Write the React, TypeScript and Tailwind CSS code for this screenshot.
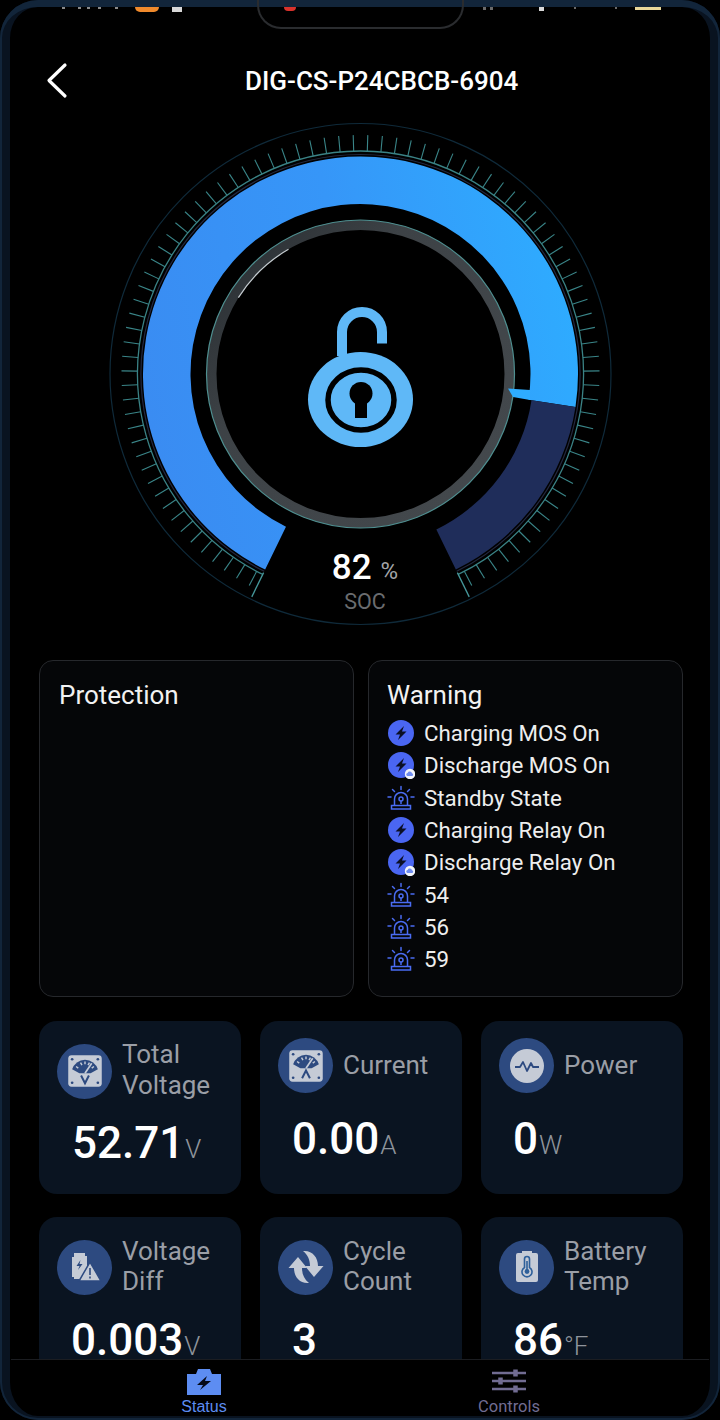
import type { ReactNode } from "react"

const CX = 360.5
const CY = 374

// angle in degrees, 0 = straight down, growing clockwise through the left side
const polar = (r: number, deg: number) => {
  const a = (deg * Math.PI) / 180
  return { x: CX - r * Math.sin(a), y: CY + r * Math.cos(a) }
}

const arcBand = (r1: number, r2: number, from: number, to: number) => {
  const a = polar(r2, from)
  const b = polar(r2, to)
  const c = polar(r1, to)
  const d = polar(r1, from)
  const large = to - from > 180 ? 1 : 0
  return `M${a.x} ${a.y}A${r2} ${r2} 0 ${large} 1 ${b.x} ${b.y}L${c.x} ${c.y}A${r1} ${r1} 0 ${large} 0 ${d.x} ${d.y}Z`
}

const arcLine = (r: number, from: number, to: number) => {
  const a = polar(r, from)
  const b = polar(r, to)
  const large = to - from > 180 ? 1 : 0
  return `M${a.x} ${a.y}A${r} ${r} 0 ${large} 1 ${b.x} ${b.y}`
}

const GAP = 26
const BLUE_END = 278.7
const ticks = Array.from({ length: 88 }, (_, i) => GAP + ((i + 0.5) * (360 - GAP * 2)) / 88)

const Gauge = () => {
  const endA = polar(221, GAP)
  const endB = polar(248, GAP)
  const endC = polar(221, 360 - GAP)
  const endD = polar(248, 360 - GAP)
  return (
    <svg className="block" width="720" height="530" viewBox="0 110 720 530">
      <defs>
        <linearGradient id="socBlue" gradientUnits="userSpaceOnUse" x1="143" y1="400" x2="579" y2="300">
          <stop offset="0" stopColor="#3a8cf2" />
          <stop offset="0.5" stopColor="#3696f8" />
          <stop offset="1" stopColor="#2eacff" />
        </linearGradient>
        <linearGradient id="ringGrey" gradientUnits="userSpaceOnUse" x1="230" y1="260" x2="500" y2="500">
          <stop offset="0" stopColor="#2c3135" />
          <stop offset="0.3" stopColor="#3d4246" />
          <stop offset="1" stopColor="#44494d" />
        </linearGradient>
      </defs>

      <circle cx={CX} cy={CY} r="250.5" fill="none" stroke="#0f2a3a" strokeWidth="1.2" />
      <path d={arcLine(223, GAP, 360 - GAP)} fill="none" stroke="#3a8285" strokeWidth="1.3" />
      <path d={arcLine(219.5, GAP, 360 - GAP)} fill="none" stroke="#23283f" strokeWidth="1.2" />
      {ticks.map((deg) => {
        const a = polar(223, deg)
        const b = polar(239, deg)
        return <line key={deg} x1={a.x} y1={a.y} x2={b.x} y2={b.y} stroke="#3a8689" strokeWidth="1.1" />
      })}
      <line x1={endA.x} y1={endA.y} x2={endB.x} y2={endB.y} stroke="#46989b" strokeWidth="1.3" />
      <line x1={endC.x} y1={endC.y} x2={endD.x} y2={endD.y} stroke="#46989b" strokeWidth="1.3" />

      <path d={arcBand(170, 217.5, GAP, BLUE_END)} fill="url(#socBlue)" />
      <path d={arcBand(173, 217.5, BLUE_END, 360 - GAP)} fill="#1f2d5a" />

      <circle cx={CX} cy={CY} r="149" fill="none" stroke="url(#ringGrey)" strokeWidth="10" />
      <circle cx={CX} cy={CY} r="154" fill="none" stroke="#4f8f90" strokeWidth="1.2" />
      <path d={arcLine(144, 122, 150)} fill="none" stroke="#c5ccd0" strokeWidth="1.2" />
      <polygon points="508,388.5 513,397 530,400 530,390" fill="#2eacff" />

      {/* padlock */}
      <path d="M342 356V332A20 20 0 0 1 382 332V343.5" fill="none" stroke="#5fb8f7" strokeWidth="10" />
      <ellipse cx="360.5" cy="399.5" rx="52.5" ry="47.5" fill="#5fb8f7" />
      <ellipse cx="361" cy="400" rx="33" ry="30" fill="none" stroke="#000" strokeWidth="5.5" />
      <circle cx="361" cy="393.5" r="11.5" fill="#000" />
      <path d="M355 395H367V418H355Z" fill="#000" />
    </svg>
  )
}

const BoltIcon = ({ cloud }: { cloud?: boolean }) => (
  <svg width="28" height="28" viewBox="0 0 28 28" className="shrink-0">
    <circle cx="14" cy="14" r="13" fill="#4a66f2" />
    <path d="M17 7L8.5 15.5H13L11 21L19.5 12.5H15Z" fill="#0b0f24" />
    {cloud && (
      <>
        <circle cx="23" cy="23" r="5.2" fill="#f2f4fa" />
        <path d="M20.3 25a1.6 1.6 0 0 1 .3-3.1 2.3 2.3 0 0 1 4.4.4 1.4 1.4 0 0 1 .2 2.7Z" fill="#6f8cf0" />
      </>
    )}
  </svg>
)

const AlarmIcon = () => (
  <svg width="28" height="28" viewBox="0 0 28 28" fill="none" stroke="#4a6cf2" strokeWidth="1.5" className="shrink-0">
    <path d="M7.5 21.5V15a6.5 6.5 0 0 1 13 0v6.5" />
    <path d="M4.5 21.5H23.5V25H4.5Z" />
    <circle cx="14" cy="15" r="2" />
    <path d="M14 17V20" />
    <path d="M14 2.5V5.5M5.5 5.5L7.5 7.5M22.5 5.5L20.5 7.5M1 13H4M24 13H27" strokeLinecap="round" />
  </svg>
)

type WarningRow = { label: string; icon: "bolt" | "cloud" | "alarm" }

const warnings: WarningRow[] = [
  { label: "Charging MOS On", icon: "bolt" },
  { label: "Discharge MOS On", icon: "cloud" },
  { label: "Standby State", icon: "alarm" },
  { label: "Charging Relay On", icon: "bolt" },
  { label: "Discharge Relay On", icon: "cloud" },
  { label: "54", icon: "alarm" },
  { label: "56", icon: "alarm" },
  { label: "59", icon: "alarm" },
]

const Dial = ({ letter }: { letter: string }) => (
  <svg width="38" height="38" viewBox="0 0 34 34">
    <rect x="2" y="3" width="30" height="28" rx="3" fill="#c5cbd6" />
    <path d="M5.5 15.5A12 12 0 0 1 28.5 15.5L22 19H12Z" fill="#2d4a80" />
    <path d="M9 13L11 14.5M13 9.5L14.3 11.8M17 8.5V11M21 9.5L19.7 11.8M25 13L23 14.5" stroke="#c5cbd6" strokeWidth="1.3" />
    <path d="M17 19L23 10" stroke="#c5cbd6" strokeWidth="1.5" />
    <circle cx="5.5" cy="6.5" r="1.2" fill="#2d4a80" />
    <circle cx="28.5" cy="6.5" r="1.2" fill="#2d4a80" />
    <circle cx="5.5" cy="27.5" r="1.2" fill="#2d4a80" />
    <circle cx="28.5" cy="27.5" r="1.2" fill="#2d4a80" />
    <path d={letter === "V" ? "M13.5 21L17 28L20.5 21" : "M13.5 28L17 21L20.5 28"} fill="none" stroke="#2d4a80" strokeWidth="1.8" />
  </svg>
)

const PowerGlyph = () => (
  <svg width="36" height="36" viewBox="0 0 36 36">
    <circle cx="18" cy="18" r="17" fill="#c5cbd6" />
    <path d="M6 19H11L14 14L18 23L22 15L24 19H30" fill="none" stroke="#2d4a80" strokeWidth="1.8" strokeLinejoin="round" />
  </svg>
)

const DiffGlyph = () => (
  <svg width="36" height="36" viewBox="0 0 36 36">
    <path d="M7 4H18V7H20V22L14 30H7V28H5V8H7Z" fill="#c5cbd6" />
    <path d="M13.5 11L9.5 17H12.5L11 21L15.5 15H12.5Z" fill="#2d4a80" />
    <path d="M23 13L34 32H12Z" fill="#c5cbd6" stroke="#2d4a80" strokeWidth="1.5" />
    <path d="M22.2 19H23.8V26H22.2ZM22.2 27.5H23.8V29.5H22.2Z" fill="#2d4a80" />
  </svg>
)

const CycleGlyph = () => (
  <svg width="38" height="38" viewBox="0 0 38 38" fill="#c5cbd6">
    <path d="M16 3C25 2 31 9 31 18H36.5L27 29L18 18H23C23 12 21 7 16 3Z" />
    <path d="M22 35C13 36 7 29 7 20H1.5L11 9L20 20H15C15 26 17 31 22 35Z" />
  </svg>
)

const TempGlyph = () => (
  <svg width="34" height="36" viewBox="0 0 34 36">
    <path d="M12 2H22V4H26A2 2 0 0 1 28 6V31A2 2 0 0 1 26 33H8A2 2 0 0 1 6 31V6A2 2 0 0 1 8 4H12Z" fill="#c5cbd6" />
    <path d="M14.5 10A2.5 2.5 0 0 1 19.5 10V18.5A5 5 0 1 1 14.5 18.5Z" fill="none" stroke="#2d5f9a" strokeWidth="1.6" />
    <circle cx="17" cy="22.5" r="2.4" fill="#2d5f9a" />
    <path d="M17 12V21" stroke="#2d5f9a" strokeWidth="1.6" />
  </svg>
)

const StatCard = ({
  icon,
  title,
  value,
  unit,
  iconClass,
  valueClass,
}: {
  icon: ReactNode
  title: ReactNode
  value: string
  unit?: string
  iconClass: string
  valueClass: string
}) => (
  <div className="h-[173px] rounded-[18px] bg-[#0a1421] pl-[18px]">
    <div className={`flex items-center gap-[10px] ${iconClass}`}>
      <div className="flex h-[55px] w-[55px] shrink-0 items-center justify-center rounded-full bg-[#2d4a80]">{icon}</div>
      <div className="-mt-[2px] text-[26px] leading-[30px] text-[#9a9ea6]">{title}</div>
    </div>
    <div className={`flex items-baseline ${valueClass}`}>
      <span className="text-[44px] leading-[52px] font-medium text-white">{value}</span>
      {unit && <span className="ml-[1px] text-[26px] leading-[30px] font-light text-[#8f949c]">{unit}</span>}
    </div>
  </div>
)

const NavTabs = () => (
  <div className="absolute right-[11px] bottom-[4px] left-[11px] flex h-[57px] border-t border-[#1b1d21] bg-black">
    <div className="ml-[148px] flex w-[90px] flex-col items-center text-[#5d8df2]">
      <svg width="36" height="28" viewBox="0 0 36 28" className="mt-[8px]">
        <path d="M1 6H10L12 1H24L26 6H35V27H1Z" fill="#5d8df2" />
        <path d="M21 8L11 17H17L14 22L25 13H19Z" fill="#050a18" />
      </svg>
      <span className="mt-[2px] font-['Liberation_Sans',sans-serif] text-[16px] leading-[17px]">Status</span>
    </div>
    <div className="ml-[215px] flex w-[90px] flex-col items-center text-[#716c92]">
      <svg width="36" height="28" viewBox="0 0 36 28" className="mt-[8px]" fill="none" stroke="currentColor" strokeWidth="2.4">
        <path d="M1 5H35M1 13H35M1 21H35" />
        <path d="M24.5 1.5V8.5M9.5 9.5V16.5M24.5 17.5V24.5" strokeWidth="4.5" />
      </svg>
      <span className="mt-[2px] text-[16.5px] leading-[17px]">Controls</span>
    </div>
  </div>
)

export default function App() {
  return (
    <div className="relative h-[1420px] w-[720px] overflow-hidden bg-black font-['Roboto',sans-serif] text-white">
      <div className="flex h-[110px] items-start">
        <svg width="30" height="40" viewBox="0 0 30 40" className="mt-[60px] ml-[44px]" fill="none" stroke="#fff" strokeWidth="3.2" strokeLinecap="round" strokeLinejoin="round">
          <path d="M21 5L5 20.5L21 36" />
        </svg>
        <h1 className="mt-[66px] ml-[171px] text-[26px] leading-[30px] font-medium">DIG-CS-P24CBCB-6904</h1>
      </div>

      <Gauge />

      <div className="absolute top-[547px] left-0 flex w-full justify-center pl-[10px]">
        <div className="flex flex-col items-center">
          <div className="flex items-baseline gap-[9px]">
            <span className="text-[35px] leading-[42px] font-medium">82</span>
            <span className="text-[24px] leading-[26px] text-[#a3a5a8]">%</span>
          </div>
          <span className="mt-[1px] text-[21.5px] leading-[24px] text-[#6a6c6f]">SOC</span>
        </div>
      </div>

      <div className="mt-[20px] grid grid-cols-2 gap-[14px] pr-[37px] pl-[39px]">
        <div className="h-[337px] rounded-[14px] border border-[#26282c] bg-[#050608] pt-[19px] pl-[19px]">
          <div className="text-[26px] leading-[30px] text-[#f2f2f2]">Protection</div>
        </div>
        <div className="h-[337px] rounded-[14px] border border-[#26282c] bg-[#050608] pt-[19px] pl-[18px]">
          <div className="mb-[7px] text-[26px] leading-[30px] text-[#f2f2f2]">Warning</div>
          {warnings.map((w) => (
            <div key={w.label} className="flex h-[32.3px] items-center gap-[9px]">
              {w.icon === "alarm" ? <AlarmIcon /> : <BoltIcon cloud={w.icon === "cloud"} />}
              <span className="text-[22.3px] leading-[28px] text-[#eeeeee]">{w.label}</span>
            </div>
          ))}
        </div>
      </div>

      <div className="mt-[24px] grid grid-cols-3 gap-x-[19px] gap-y-[23px] pr-[37px] pl-[39px]">
        <StatCard
          icon={<Dial letter="V" />}
          title={<div className="leading-[31px]">Total<br />Voltage</div>}
          value="52.71"
          unit="V"
          iconClass="pt-[20px]"
          valueClass="mt-[16px] pl-[15px]"
        />
        <StatCard
          icon={<Dial letter="A" />}
          title="Current"
          value="0.00"
          unit="A"
          iconClass="pt-[17px]"
          valueClass="mt-[20px] pl-[14px]"
        />
        <StatCard
          icon={<PowerGlyph />}
          title="Power"
          value="0"
          unit="W"
          iconClass="pt-[17px]"
          valueClass="mt-[20px] pl-[14px]"
        />
        <StatCard
          icon={<DiffGlyph />}
          title={<>Voltage<br />Diff</>}
          value="0.003"
          unit="V"
          iconClass="pt-[21px]"
          valueClass="mt-[18px] pl-[14px]"
        />
        <StatCard
          icon={<CycleGlyph />}
          title={<>Cycle<br />Count</>}
          value="3"
          iconClass="pt-[21px]"
          valueClass="mt-[18px] pl-[14px]"
        />
        <StatCard
          icon={<TempGlyph />}
          title={<>Battery<br />Temp</>}
          value="86"
          unit="°F"
          iconClass="pt-[21px]"
          valueClass="mt-[18px] pl-[14px]"
        />
      </div>

      <NavTabs />

      {/* device bezel and what is left of the phone status bar */}
      <div className="pointer-events-none absolute inset-0 rounded-[38px] border-x-[10px] border-t-[7px] border-b-[4px] border-[#091320]" />
      <div className="pointer-events-none absolute inset-0 rounded-[38px] border-x-2 border-t-[7px] border-b-2 border-[#12253a]" />
      <div className="absolute top-0 left-[257px] h-[29px] w-[207px] rounded-b-[24px] border-x-2 border-b-2 border-t-0 border-[#2a2c2f]" />
      <div className="absolute top-[7px] left-[135px] h-[5px] w-[24px] rounded-b-[5px] bg-[#f08a2c]" />
      <div className="absolute top-[7px] left-[172px] h-[5px] w-[10px] bg-[#d8d8d8]" />
      <div className="absolute top-[7px] left-[284px] h-[4px] w-[12px] rounded-b-full bg-[#d8322c]" />
      <div className="absolute top-[7px] left-[635px] h-[3px] w-[26px] bg-[#e8d79a]" />
      <div className="absolute top-[7px] left-[62px] h-[2px] w-[3px] bg-[#8a8a8a]" />
      <div className="absolute top-[7px] left-[78px] h-[2px] w-[3px] bg-[#8a8a8a]" />
      <div className="absolute top-[7px] left-[87px] h-[2px] w-[3px] bg-[#8a8a8a]" />
      <div className="absolute top-[7px] left-[98px] h-[2px] w-[3px] bg-[#8a8a8a]" />
      <div className="absolute top-[7px] left-[115px] h-[2px] w-[3px] bg-[#8a8a8a]" />
      <div className="absolute top-[7px] left-[483px] h-[3px] w-[3px] bg-[#6a6a6a]" />
      <div className="absolute top-[7px] left-[490px] h-[3px] w-[3px] bg-[#6a6a6a]" />
      <div className="absolute top-[7px] left-[539px] h-[4px] w-[5px] bg-[#d8d8d8]" />
      <div className="absolute top-[7px] left-[574px] h-[2px] w-[2px] bg-[#6a6a6a]" />
      <div className="absolute top-[7px] left-[615px] h-[2px] w-[2px] bg-[#6a6a6a]" />
    </div>
  )
}
